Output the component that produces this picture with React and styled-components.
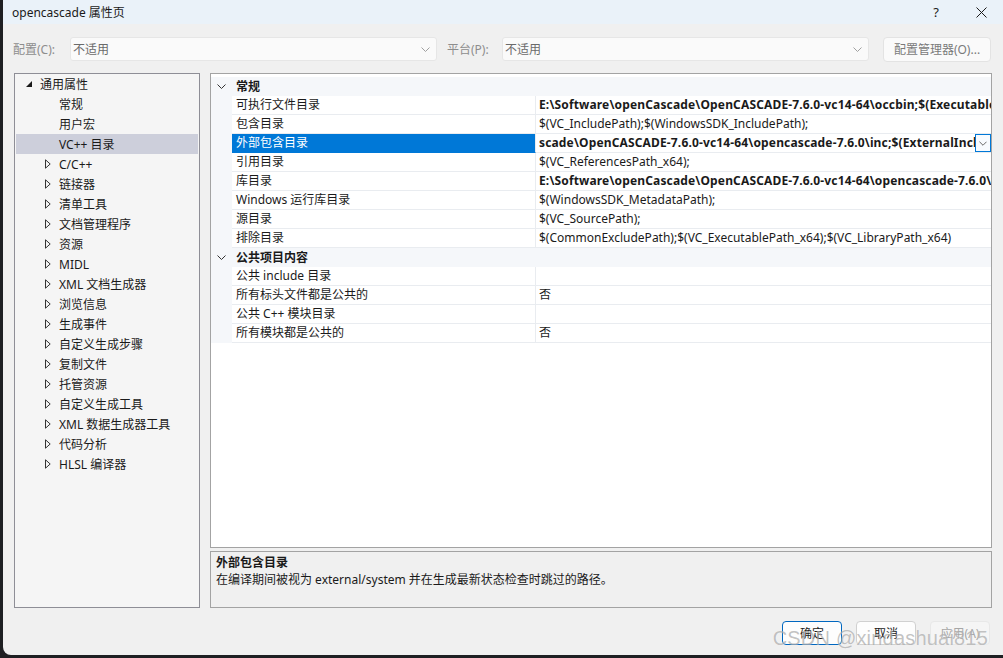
import React from "react";
import styled, { createGlobalStyle, css } from "styled-components";

const GlobalStyle = createGlobalStyle`
    html, body {
        margin: 0;
        padding: 0;
        background: #1e1f22;
        overflow: hidden;
    }
    * {
        box-sizing: border-box;
    }
`

const FONT = `"Noto Sans", "Noto Sans CJK SC", sans-serif`

const Janela = styled.div`
    position: relative;
    margin-left: 3px;
    width: 1000px;
    height: 655px;
    background: #f0f0f0;
    border-bottom-left-radius: 8px;
    display: flex;
    flex-direction: column;
    font-family: ${FONT};
    font-size: 12px;
    color: #1a1a1a;
`

const BarraTitulo = styled.div`
    height: 24px;
    background: #eaf2f9;
    display: flex;
    align-items: center;
    padding-left: 9px;

    .titulo {
        flex: 1;
        font-size: 12px;
    }

    .ajuda {
        width: 44px;
        text-align: center;
        font-size: 13px;
        margin-right: 1px;
    }

    .fechar {
        width: 44px;
        height: 24px;
        display: flex;
        align-items: center;
        justify-content: center;
    }
`

const BarraFerramentas = styled.div`
    display: flex;
    align-items: center;
    margin-top: 13px;
    height: 24px;
    padding: 0 10px;

    .rotulo {
        color: #8d8d8d;
        width: 57px;
    }

    .rotulo_plataforma {
        color: #8d8d8d;
        margin-left: 10px;
        width: 55px;
    }
`

const Seletor = styled.div`
    width: 367px;
    height: 24px;
    background: #fafafa;
    border: 1px solid #e6e6e6;
    border-radius: 3px;
    display: flex;
    align-items: center;
    justify-content: space-between;
    padding: 0 6px 0 2px;
    color: #6a6a6a;
`

const BotaoGerenciador = styled.div`
    margin-left: 14px;
    width: 108px;
    height: 25px;
    background: #fafafa;
    border: 1px solid #e3e3e3;
    border-radius: 4px;
    display: flex;
    align-items: center;
    justify-content: center;
    color: #7a7a7a;
`

const Corpo = styled.div`
    display: flex;
    margin-top: 12px;
    padding: 0 11px 0 11px;
    height: 535px;
    gap: 10px;
`

const Arvore = styled.div`
    width: 186px;
    background: #f5f5f5;
    border: 1px solid #8e8e96;
    padding: 0 1px;
`

const ItemArvore = styled.div`
    height: 20px;
    display: flex;
    align-items: center;
    padding-left: ${p => 10 + p.$nivel * 19}px;
    white-space: nowrap;
    ${p => p.$selecionado && css`
        background: #cdcfdb;
    `}

    .expansor {
        width: 14px;
        display: flex;
        align-items: center;
    }
`

const ColunaDireita = styled.div`
    flex: 1;
    display: flex;
    flex-direction: column;
    gap: 3px;
`

const Grade = styled.div`
    flex: 1;
    background: #ffffff;
    border: 1px solid #a3a3a3;
    padding-top: 3px;
`

const LinhaGrade = styled.div`
    display: grid;
    grid-template-columns: 21px 304px 1fr;
    height: 19px;

    .sarjeta {
        background: #f5f7fa;
    }

    .nome {
        border-bottom: 1px solid #e9ecf0;
        border-right: 1px solid #e9ecf0;
        padding-left: 4px;
        line-height: 18px;
        white-space: nowrap;
        overflow: hidden;
    }

    .valor {
        position: relative;
        border-bottom: 1px solid #e9ecf0;
        padding-left: 3px;
        line-height: 18px;
        white-space: nowrap;
        overflow: hidden;
        letter-spacing: ${p => p.$negrito ? 0.15 : 0}px;
        font-weight: ${p => p.$negrito ? 700 : 400};
        padding-right: ${p => p.$selecionado ? 18 : 0}px;
    }

    ${p => p.$selecionado && css`
        .nome {
            background: #0078d7;
            color: #ffffff;
            border-bottom-color: #0078d7;
        }
    `}
`

const CabecalhoCategoria = styled.div`
    display: grid;
    grid-template-columns: 21px 1fr;
    height: 19px;
    background: #f5f7fa;

    .sarjeta {
        display: flex;
        align-items: center;
        justify-content: center;
        padding-right: 1px;
    }

    .nome {
        padding-left: 4px;
        line-height: 19px;
        font-weight: 700;
    }
`

const BotaoSuspenso = styled.div`
    position: absolute;
    right: 0;
    top: 0;
    width: 16px;
    height: 18px;
    border: 1px solid #0078d7;
    background: #f7fbff;
    display: flex;
    align-items: center;
    justify-content: center;
`

const PainelDescricao = styled.div`
    height: 57px;
    background: #f0f0f0;
    border: 1px solid #a3a3a3;
    padding: 2px 5px;
    line-height: 17px;

    .titulo_descricao {
        font-weight: 700;
    }
`

const Rodape = styled.div`
    position: relative;
    display: flex;
    justify-content: flex-end;
    gap: 14px;
    margin-top: 13px;
    padding-right: 13px;
`

const Botao = styled.div`
    width: 60px;
    height: 24px;
    border-radius: 4px;
    display: flex;
    align-items: center;
    justify-content: center;
    background: #fdfdfd;
    border: 1px solid #d0d0d0;
    color: #1a1a1a;

    ${p => p.$primario && css`
        border: 1.5px solid #0067c0;
    `}

    ${p => p.$desativado && css`
        background: #f5f5f5;
        border-color: #e8e8e8;
        color: #a6a6a6;
    `}
`

const MarcaDagua = styled.div`
    position: absolute;
    right: 15px;
    top: 6px;
    font-family: "Liberation Sans", "Noto Sans", sans-serif;
    font-size: 20px;
    letter-spacing: 0.2px;
    color: rgba(120, 120, 120, 0.45);
    text-shadow: 0 0 1px rgba(255, 255, 255, 0.6);
    pointer-events: none;
    white-space: nowrap;
`

const Chevron = ({ cor = "#8a8a8a", w = 9 }) => (
    <svg width={w} height="5" viewBox="0 0 9 5">
        <polyline points="0.5,0.5 4.5,4.5 8.5,0.5" fill="none" stroke={cor} strokeWidth="1" />
    </svg>
)

const TrianguloAberto = () => (
    <svg width="6" height="6" viewBox="0 0 6 6">
        <polygon points="6,0 6,6 0,6" fill="#1a1a1a" />
    </svg>
)

const TrianguloFechado = () => (
    <svg width="6" height="10" viewBox="0 0 6 10">
        <polygon points="0.5,0.8 5.2,5 0.5,9.2" fill="none" stroke="#333" strokeWidth="1" />
    </svg>
)

const itensArvore = [
    { texto: "通用属性", nivel: 0, estado: "aberto" },
    { texto: "常规", nivel: 1 },
    { texto: "用户宏", nivel: 1 },
    { texto: "VC++ 目录", nivel: 1, selecionado: true },
    { texto: "C/C++", nivel: 1, estado: "fechado" },
    { texto: "链接器", nivel: 1, estado: "fechado" },
    { texto: "清单工具", nivel: 1, estado: "fechado" },
    { texto: "文档管理程序", nivel: 1, estado: "fechado" },
    { texto: "资源", nivel: 1, estado: "fechado" },
    { texto: "MIDL", nivel: 1, estado: "fechado" },
    { texto: "XML 文档生成器", nivel: 1, estado: "fechado" },
    { texto: "浏览信息", nivel: 1, estado: "fechado" },
    { texto: "生成事件", nivel: 1, estado: "fechado" },
    { texto: "自定义生成步骤", nivel: 1, estado: "fechado" },
    { texto: "复制文件", nivel: 1, estado: "fechado" },
    { texto: "托管资源", nivel: 1, estado: "fechado" },
    { texto: "自定义生成工具", nivel: 1, estado: "fechado" },
    { texto: "XML 数据生成器工具", nivel: 1, estado: "fechado" },
    { texto: "代码分析", nivel: 1, estado: "fechado" },
    { texto: "HLSL 编译器", nivel: 1, estado: "fechado" },
]

const categorias = [
    {
        nome: "常规",
        propriedades: [
            { nome: "可执行文件目录", valor: "E:\\Software\\openCascade\\OpenCASCADE-7.6.0-vc14-64\\occbin;$(ExecutablePath)", negrito: true },
            { nome: "包含目录", valor: "$(VC_IncludePath);$(WindowsSDK_IncludePath);" },
            { nome: "外部包含目录", valor: "scade\\OpenCASCADE-7.6.0-vc14-64\\opencascade-7.6.0\\inc;$(ExternalIncludePath)", negrito: true, selecionado: true },
            { nome: "引用目录", valor: "$(VC_ReferencesPath_x64);" },
            { nome: "库目录", valor: "E:\\Software\\openCascade\\OpenCASCADE-7.6.0-vc14-64\\opencascade-7.6.0\\win64\\vc14\\lib", negrito: true },
            { nome: "Windows 运行库目录", valor: "$(WindowsSDK_MetadataPath);" },
            { nome: "源目录", valor: "$(VC_SourcePath);" },
            { nome: "排除目录", valor: "$(CommonExcludePath);$(VC_ExecutablePath_x64);$(VC_LibraryPath_x64)" },
        ],
    },
    {
        nome: "公共项目内容",
        propriedades: [
            { nome: "公共 include 目录", valor: "" },
            { nome: "所有标头文件都是公共的", valor: "否" },
            { nome: "公共 C++ 模块目录", valor: "" },
            { nome: "所有模块都是公共的", valor: "否" },
        ],
    },
]

function App() {
    return (
        <>
            <GlobalStyle />
            <Janela>
                <BarraTitulo>
                    <span className="titulo">opencascade 属性页</span>
                    <span className="ajuda">?</span>
                    <span className="fechar">
                        <svg width="11" height="11" viewBox="0 0 11 11">
                            <path d="M0.5 0.5 L10.5 10.5 M10.5 0.5 L0.5 10.5" stroke="#1a1a1a" strokeWidth="1" />
                        </svg>
                    </span>
                </BarraTitulo>

                <BarraFerramentas>
                    <span className="rotulo">配置(C):</span>
                    <Seletor>
                        <span>不适用</span>
                        <Chevron cor="#a0a0a0" />
                    </Seletor>
                    <span className="rotulo_plataforma">平台(P):</span>
                    <Seletor>
                        <span>不适用</span>
                        <Chevron cor="#a0a0a0" />
                    </Seletor>
                    <BotaoGerenciador>配置管理器(O)...</BotaoGerenciador>
                </BarraFerramentas>

                <Corpo>
                    <Arvore>
                        {itensArvore.map((item) => (
                            <ItemArvore key={item.texto} $nivel={item.nivel} $selecionado={item.selecionado}>
                                <span className="expansor">
                                    {item.estado === "aberto" && <TrianguloAberto />}
                                    {item.estado === "fechado" && <TrianguloFechado />}
                                </span>
                                <span>{item.texto}</span>
                            </ItemArvore>
                        ))}
                    </Arvore>

                    <ColunaDireita>
                        <Grade>
                            {categorias.map((cat) => (
                                <React.Fragment key={cat.nome}>
                                    <CabecalhoCategoria>
                                        <span className="sarjeta"><Chevron cor="#333" /></span>
                                        <span className="nome">{cat.nome}</span>
                                    </CabecalhoCategoria>
                                    {cat.propriedades.map((prop) => (
                                        <LinhaGrade key={prop.nome} $negrito={prop.negrito} $selecionado={prop.selecionado}>
                                            <span className="sarjeta" />
                                            <span className="nome">{prop.nome}</span>
                                            <span className="valor">
                                                {prop.valor}
                                                {prop.selecionado && (
                                                    <BotaoSuspenso>
                                                        <Chevron cor="#555" w={8} />
                                                    </BotaoSuspenso>
                                                )}
                                            </span>
                                        </LinhaGrade>
                                    ))}
                                </React.Fragment>
                            ))}
                        </Grade>

                        <PainelDescricao>
                            <div className="titulo_descricao">外部包含目录</div>
                            <div>在编译期间被视为 external/system 并在生成最新状态检查时跳过的路径。</div>
                        </PainelDescricao>
                    </ColunaDireita>
                </Corpo>

                <Rodape>
                    <Botao $primario>确定</Botao>
                    <Botao>取消</Botao>
                    <Botao $desativado>应用(A)</Botao>
                    <MarcaDagua>CSDN @xindashuai815</MarcaDagua>
                </Rodape>
            </Janela>
        </>
    )
}

export default App;
